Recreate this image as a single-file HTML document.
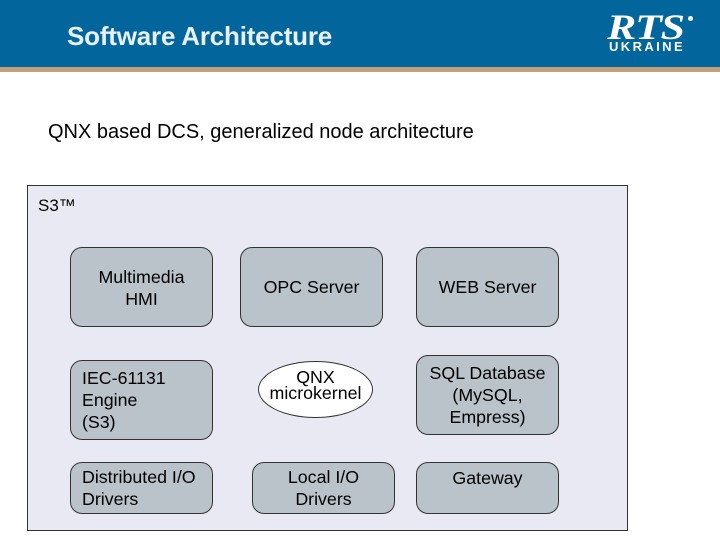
<!DOCTYPE html>
<html><head><meta charset="utf-8"><style>
body{margin:0;width:720px;height:540px;background:#fff;position:relative;overflow:hidden;font-family:"Liberation Sans",Arial,sans-serif;}
.hdr{position:absolute;left:0;top:0;width:720px;height:67px;background:#02659b;}
.strip{position:absolute;left:0;top:67px;width:720px;height:5px;background:#c49e78;}
.title{position:absolute;left:67px;top:21px;color:#e8f0f8;font-weight:bold;font-size:26px;letter-spacing:-0.2px;}
.rts{position:absolute;left:607px;top:11px;color:#fff;font-family:"Liberation Serif",serif;font-weight:bold;font-style:italic;font-size:36px;line-height:32px;letter-spacing:-1px;transform:scaleX(1.22);transform-origin:left;}
.reg{position:absolute;left:688px;top:16px;width:5px;height:5px;border-radius:50%;background:#fff;}
.ukr{position:absolute;left:609px;top:39px;color:#fff;font-weight:bold;font-size:13px;letter-spacing:2.4px;}
.sub{position:absolute;left:48px;top:121px;font-size:20px;color:#000;}
.cont{position:absolute;left:27px;top:185px;width:599px;height:344px;border:1px solid #333;background:#e9e9f3;}
.s3{position:absolute;left:38px;top:196px;font-size:17px;}
.b{position:absolute;box-sizing:border-box;border:1px solid #333;border-radius:12px;background:#bac2ca;display:flex;align-items:center;justify-content:center;text-align:center;font-size:17.8px;line-height:22px;color:#000;}
.l{justify-content:flex-start;text-align:left;padding-left:11px;}
</style></head><body>
<div class="hdr"></div><div class="strip"></div>
<div class="title">Software Architecture</div>
<div class="rts">RTS</div><div class="reg"></div>
<div class="ukr">UKRAINE</div>
<div class="sub">QNX based DCS, generalized node architecture</div>
<div class="cont"></div>
<div class="s3">S3™</div>
<div class="b" style="left:70px;top:247px;width:143px;height:80px;align-items:flex-start;padding-top:18px">Multimedia<br>HMI</div>
<div class="b" style="left:240px;top:247px;width:143px;height:80px">OPC Server</div>
<div class="b" style="left:416px;top:247px;width:143px;height:80px">WEB Server</div>
<div class="b l" style="left:70px;top:360px;width:143px;height:80px">IEC-61131<br>Engine<br>(S3)</div>
<div class="b" style="left:258px;top:361px;width:115px;height:57px;border-radius:50%;background:#fff;line-height:16px;padding-bottom:10px">QNX<br>microkernel</div>
<div class="b" style="left:416px;top:355px;width:143px;height:80px">SQL Database<br>(MySQL,<br>Empress)</div>
<div class="b l" style="left:70px;top:462px;width:143px;height:52px">Distributed I/O<br>Drivers</div>
<div class="b" style="left:252px;top:462px;width:143px;height:52px">Local I/O<br>Drivers</div>
<div class="b" style="left:416px;top:462px;width:143px;height:52px;align-items:flex-start;padding-top:4px">Gateway</div>
</body></html>
